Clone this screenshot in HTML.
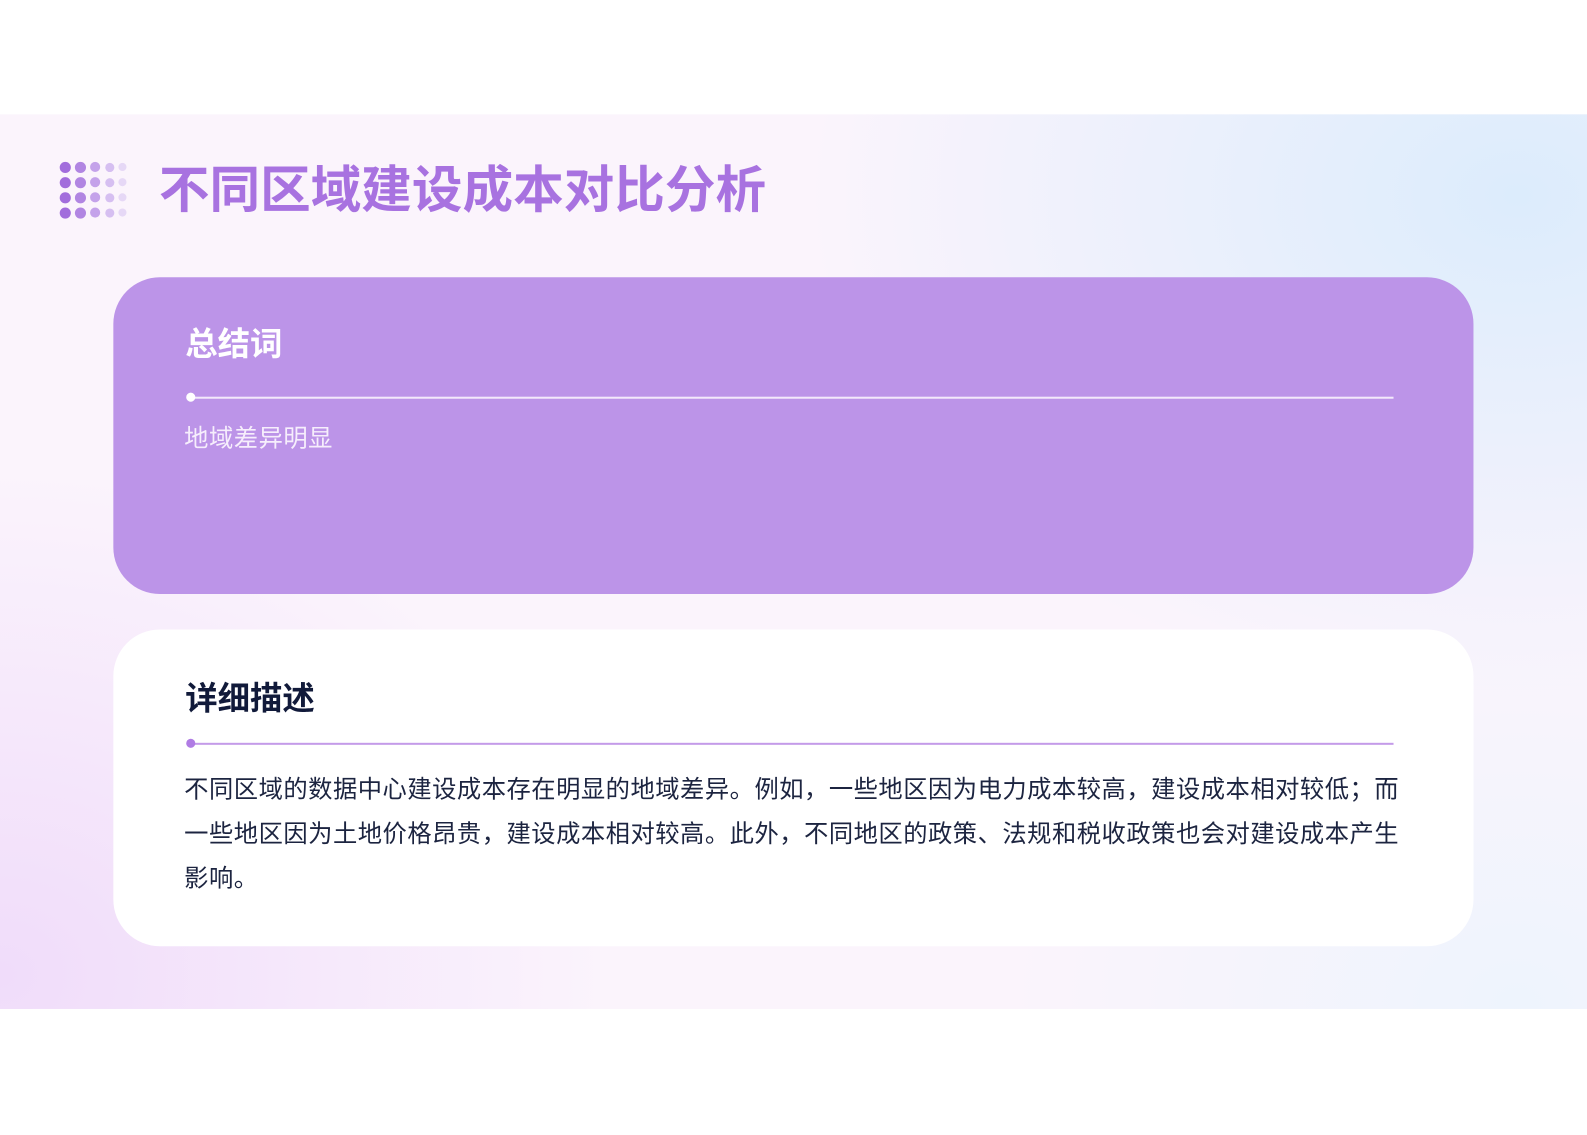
<!DOCTYPE html>
<html><head><meta charset="utf-8"><style>
body{margin:0;width:1587px;height:1122px;background:#fff;position:relative;overflow:hidden;font-family:"Liberation Sans","Noto Sans CJK SC",sans-serif}
#wrap{position:absolute;left:0;top:0;width:1587px;height:1122px;transform:scale(1.012);transform-origin:0 0}
.slide{position:absolute;left:0;top:113px;width:1587px;height:884px;
background:radial-gradient(ellipse 700px 500px at 1500px 80px,#dcecfc 0%,rgba(220,236,252,0) 100%),radial-gradient(ellipse 600px 500px at 0px 850px,#f0dcfa 0%,rgba(240,220,250,0) 100%),radial-gradient(ellipse 500px 400px at 1500px 880px,#eef4fd 0%,rgba(238,244,253,0) 100%),#fbf4fc}
.dot{position:absolute;border-radius:50%}
.title{position:absolute;left:157px;top:156px;font-size:50px;font-weight:bold;color:#a872e0;line-height:64px;letter-spacing:0}
.card{position:absolute;left:112px;width:1344px;height:313px;border-radius:46px}
.c1{top:274px;background:#bc94e8}
.c2{top:622px;background:#fff}
.h{position:absolute;left:71px;font-size:32px;font-weight:bold;line-height:40px}
.line{position:absolute;left:73px;width:1192px;height:2px}
.ld{position:absolute;left:-1px;top:-4px;width:9px;height:9px;border-radius:50%}
.txt{position:absolute;left:70px;font-size:24px;letter-spacing:0.5px}
</style></head><body>
<div id="wrap">
<div class="slide"></div>
<div id="dots"></div>
<div class="title">不同区域建设成本对比分析</div>
<div class="card c1">
<div class="h" style="top:46px;color:#fff">总结词</div>
<div class="line" style="top:118px;background:#f3e9fb"><div class="ld" style="background:#fff"></div></div>
<div class="txt" style="top:143px;color:#f6eefc;line-height:34px">地域差异明显</div>
</div>
<div class="card c2">
<div class="h" style="top:48px;color:#111a3a">详细描述</div>
<div class="line" style="top:112px;background:#c49be9"><div class="ld" style="background:#b07ce4"></div></div>
<div class="txt" style="top:137px;color:#1c2440;line-height:44px">不同区域的数据中心建设成本存在明显的地域差异。例如，一些地区因为电力成本较高，建设成本相对较低；而<br>一些地区因为土地价格昂贵，建设成本相对较高。此外，不同地区的政策、法规和税收政策也会对建设成本产生<br>影响。</div>
</div>
</div>
<script>
var xs=[64,79,94,108,121],ys=[165,180,195,210],cols=["#a26ddc","#b185e2","#c4a2ea","#d6bff1","#e6d8f6"],rs=[5.5,5.5,5,4.5,4];
var h="";for(var r=0;r<4;r++)for(var c=0;c<5;c++){var s=rs[c]*2;h+='<div class="dot" style="left:'+(xs[c]-rs[c])+'px;top:'+(ys[r]-rs[c])+'px;width:'+s+'px;height:'+s+'px;background:'+cols[c]+'"></div>';}
document.getElementById("dots").innerHTML=h;
</script>
</body></html>
